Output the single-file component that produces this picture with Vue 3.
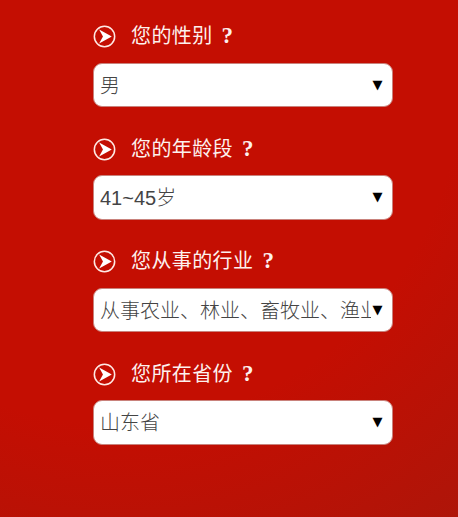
<script setup>
const fields = [
  { title: '您的性别', value: '男' },
  { title: '您的年龄段', value: '41~45岁' },
  { title: '您从事的行业', value: '从事农业、林业、畜牧业、渔业' },
  { title: '您所在省份', value: '山东省' }
]
</script>

<template>
  <main class="page">
    <section v-for="f in fields" :key="f.title" class="field">
      <h2 class="title">
        <svg class="icon" viewBox="0 0 24 24" aria-hidden="true">
          <circle cx="12" cy="12" r="10.6" fill="none" stroke="#ffe9e4" stroke-width="1.6" />
          <path d="M6.4 4.8 L19.6 12 L6.4 19.2 L10.4 12 Z" fill="#fff" />
        </svg>
        <span>{{ f.title }}<b class="mark">?</b></span>
      </h2>
      <div class="select">
        <span class="value">{{ f.value }}</span>
        <span class="arrow">▼</span>
      </div>
    </section>
  </main>
</template>

<style scoped>
.page {
  box-sizing: border-box;
  width: 458px;
  height: 517px;
  overflow: hidden;
  padding: 20px 65px 0 93px;
  background: radial-gradient(circle at 25% 15%, #c40e02 0%, #c40e02 62%, #ae1509 100%);
}
.field {
  height: 112.5px;
}
.title {
  display: flex;
  align-items: center;
  gap: 15px;
  height: 33px;
  margin: 0 0 9.5px;
  font: 400 20px/33px "Liberation Serif", "Noto Sans CJK SC", serif;
  color: #fdf1ee;
  letter-spacing: 0.4px;
}
.mark {
  margin-left: 9px;
  font-size: 23px;
  line-height: 1;
  font-weight: 700;
}
.icon {
  width: 23px;
  height: 23px;
  flex: none;
}
.select {
  box-sizing: border-box;
  display: flex;
  align-items: center;
  width: 300px;
  height: 44.5px;
  padding: 0 7.5px 0 6px;
  background: #fff;
  border: 1.5px solid #c9827c;
  border-radius: 9px;
}
.value {
  flex: 1;
  min-width: 0;
  overflow: hidden;
  white-space: nowrap;
  padding-top: 2px;
  font: 300 20px/24px "Liberation Sans", "Noto Sans CJK SC", sans-serif;
  color: #444;
}
.arrow {
  flex: none;
  width: 12px;
  margin-left: 2px;
  margin-top: -1px;
  font: 13px/1 "DejaVu Sans", sans-serif;
  color: #000;
}
</style>
